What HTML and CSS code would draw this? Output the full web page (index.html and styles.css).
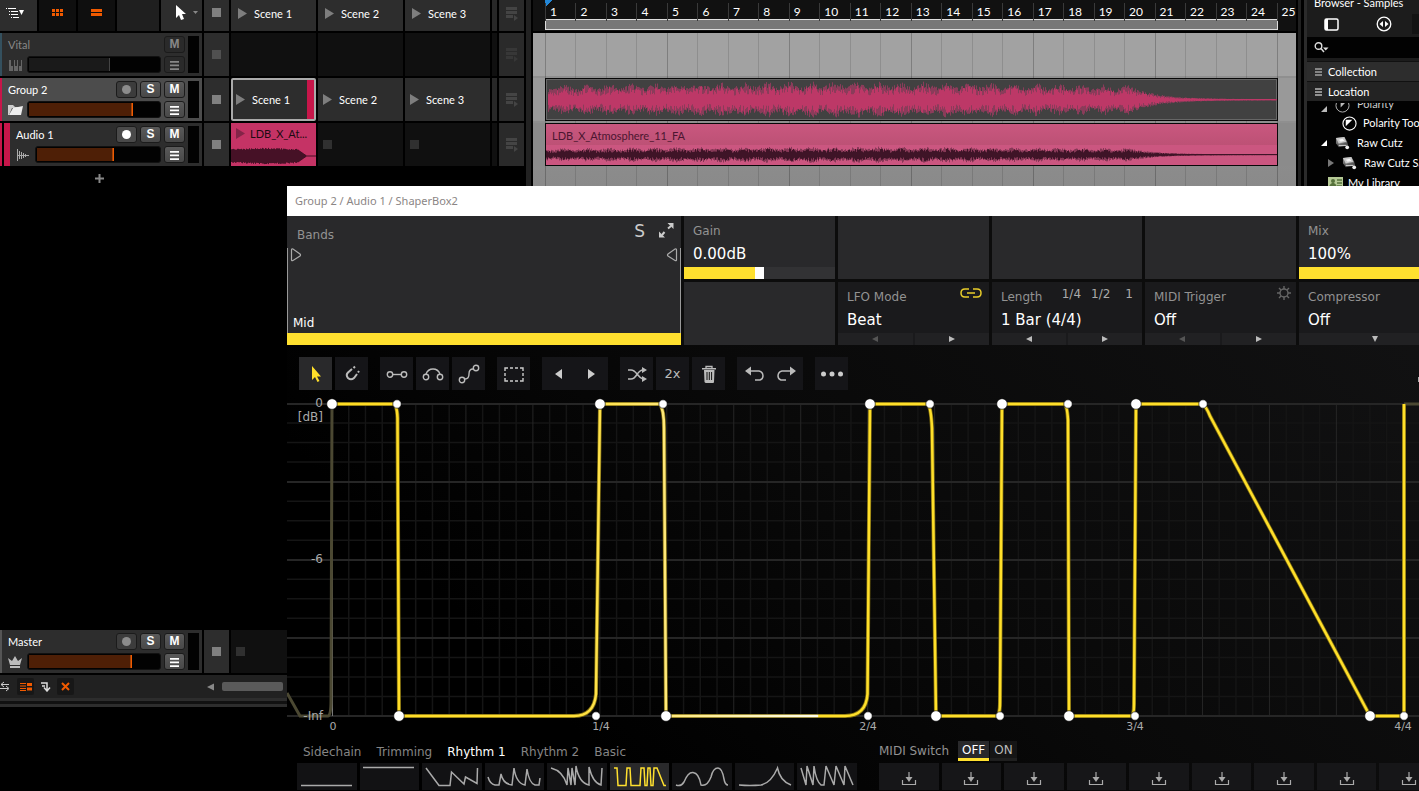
FILE: index.html
```html
<!DOCTYPE html>
<html lang="en">
<head>
<meta charset="utf-8">
<title>ShaperBox2 session</title>
<link rel="stylesheet" href="styles.css">
</head>
<body>
<svg class="defs" aria-hidden="true">
  <symbol id="play" viewBox="0 0 10 12"><path d="M0 0L10 6L0 12Z" fill="currentColor"/></symbol>
  <symbol id="lines" viewBox="0 0 10 10"><path d="M0 1.500H10M0 5.500H10M0 9.500H10" stroke="currentColor" stroke-width="2"/></symbol>
  <symbol id="queue" viewBox="0 0 12 14"><path d="M0 1.500H11M0 5.500H11M0 9.500H7" stroke="currentColor" stroke-width="3"/><path d="M8 8L12 11L8 14Z" fill="currentColor"/></symbol>
  <symbol id="load" viewBox="0 0 16 14"><path d="M1.500 8V12.500H14.500V8M8 0V6" fill="none" stroke="currentColor" stroke-width="1.200"/><path d="M4.500 5H11.500L8 10Z" fill="currentColor"/></symbol>
  <symbol id="left" viewBox="0 0 6 6"><path d="M6 0V6L0 3Z" fill="currentColor"/></symbol>
  <symbol id="right" viewBox="0 0 6 6"><path d="M0 0V6L6 3Z" fill="currentColor"/></symbol>
  <symbol id="drive" viewBox="0 0 16 14"><path d="M1 1L10 0L13 5V9L4 10L1 7Z" fill="#777"/><path d="M1 1L10 0L12 5L4 7Z" fill="#c9c9c9"/><path d="M4 3L8 2L10 4L6 5Z" fill="#f4f4f4"/><path d="M1 6L4 8L13 6L14 9L4 11Z" fill="#555"/><path d="M4 9H12" stroke="#ddd"/><circle cx="13" cy="11" r="2" fill="#eee"/></symbol>
</svg>

<div class="daw">
  <main class="launcher">
    <div class="row tools">
      <div class="toolbar">
        <button class="tool menu" aria-label="View menu"><svg width="19" height="12" viewBox="0 0 19 12"><path d="M0 1.500H1M2 1.500H10M3 4.500H4M5 4.500H12M3 7.500H4M5 7.500H12M5 10.500H6M7 10.500H13" stroke="#fff"/><path d="M13 3H18L15.500 8Z" fill="#fff"/></svg></button>
        <button class="tool dark" aria-label="Clip launcher"><svg width="11" height="7" viewBox="0 0 11 7"><path d="M0 1.500H11M0 5.500H11" stroke="#f05a00" stroke-width="3" stroke-dasharray="3 1"/></svg></button>
        <button class="tool dark" aria-label="Arranger"><svg width="11" height="7" viewBox="0 0 11 7"><path d="M0 1.500H11M0 5.500H11" stroke="#f05a00" stroke-width="3"/></svg></button>
        <div class="tool blank"></div>
        <button class="tool pointer" aria-label="Pointer tool"><svg width="22" height="16" viewBox="0 0 22 16"><path d="M0 0V13L3 10L5 15L8 14L6 9H10Z" fill="#fff"/><path d="M17 6H22L19.500 9Z" fill="#888"/></svg></button>
      </div>
      <button class="stop" aria-label="Stop all"><i></i></button>
      <button class="cell scene head"><svg><use href="#play"/></svg>Scene 1</button>
      <button class="cell scene head"><svg><use href="#play"/></svg>Scene 2</button>
      <button class="cell scene head"><svg><use href="#play"/></svg>Scene 3</button>
      <div class="sliver lit"></div>
      <button class="queue" aria-label="Queue"><svg><use href="#queue"/></svg></button>
    </div>
    <div class="row">
      <section class="track off">
        <div class="track-body">
          <div class="line"><span class="name">Vital</span><button class="mini">M</button></div>
          <div class="line"><svg class="ico" viewBox="0 0 16 14"><path d="M1 2H3V8H5V13H1ZM6 2H7V8H9V2H10V13H6ZM11 8H13V2H14V13H11Z" fill="#666"/></svg><input type="range" class="vol" aria-label="Vital volume" value="62" style="--v:62%"><button class="mini" aria-label="Vital menu"><svg><use href="#lines"/></svg></button></div>
        </div><div class="meter"></div>
      </section>
      <button class="stop dim" aria-label="Stop Vital"><i></i></button>
      <div class="cell empty"></div><div class="cell empty"></div><div class="cell empty"></div>
      <div class="sliver"></div>
      <button class="queue dim" aria-label="Queue Vital"><svg><use href="#queue"/></svg></button>
    </div>
    <div class="row">
      <section class="track group">
        <div class="track-body">
          <div class="line"><span class="name">Group 2</span><button class="mini rec" aria-label="Record Group 2"><i></i></button><button class="mini">S</button><button class="mini">M</button></div>
          <div class="line"><svg class="ico" viewBox="0 0 16 14"><path d="M0 2H5L7 4H12V5H4L1 12H0Z" fill="#ccc"/><path d="M5 5L15 3L13 12H1Z" fill="#eee"/></svg><input type="range" class="vol" aria-label="Group 2 volume" value="80" style="--v:80%"><button class="mini" aria-label="Group 2 menu"><svg><use href="#lines"/></svg></button></div>
        </div><div class="meter"></div>
      </section>
      <button class="stop" aria-label="Stop Group 2"><i></i></button>
      <button class="cell scene picked"><svg><use href="#play"/></svg>Scene 1</button>
      <button class="cell scene"><svg><use href="#play"/></svg>Scene 2</button>
      <button class="cell scene"><svg><use href="#play"/></svg>Scene 3</button>
      <div class="sliver lit"></div>
      <button class="queue" aria-label="Queue Group 2"><svg><use href="#queue"/></svg></button>
    </div>
    <div class="row">
      <section class="track child">
        <div class="track-body">
          <div class="line"><span class="name">Audio 1</span><button class="mini rec armed" aria-label="Record Audio 1"><i></i></button><button class="mini">S</button><button class="mini">M</button></div>
          <div class="line"><svg class="ico" viewBox="0 0 16 14"><path d="M1.500 1V13M3.500 3V11M5.500 4V11M7.500 5V10M9.500 6V9M1 7.500H13" stroke="#aaa" fill="none"/></svg><input type="range" class="vol" aria-label="Audio 1 volume" value="63" style="--v:63%"><button class="mini" aria-label="Audio 1 menu"><svg><use href="#lines"/></svg></button></div>
        </div><div class="meter"></div>
      </section>
      <button class="stop" aria-label="Stop Audio 1"><i></i></button>
      <button class="cell clip"><span class="clip-name"><svg><use href="#play"/></svg>LDB_X_At...</span><svg class="clip-wave" id="launch-wave" viewBox="0 0 85 20"></svg></button>
      <button class="cell slot" aria-label="Empty slot"><i></i></button>
      <button class="cell slot" aria-label="Empty slot"><i></i></button>
      <div class="sliver"></div>
      <button class="queue" aria-label="Queue Audio 1"><svg><use href="#queue"/></svg></button>
    </div>
    <button class="add" aria-label="Add track"><svg width="9" height="9" viewBox="0 0 9 9"><path d="M4.500 0V9M0 4.500H9" stroke="#888" stroke-width="2"/></svg></button>
    <div class="spacer"></div>
    <div class="row">
      <section class="track master">
        <div class="track-body">
          <div class="line"><span class="name">Master</span><button class="mini rec" aria-label="Record Master"><i></i></button><button class="mini">S</button><button class="mini">M</button></div>
          <div class="line"><svg class="ico" viewBox="0 0 16 14"><path d="M0 3L4 6L7 1L10 6L14 3L12 10H2ZM2 11H12V13H2Z" fill="#bbb"/></svg><input type="range" class="vol" aria-label="Master volume" value="79" style="--v:79%"><button class="mini" aria-label="Master menu"><svg><use href="#lines"/></svg></button></div>
        </div><div class="meter"></div>
      </section>
      <button class="stop" aria-label="Stop Master"><i></i></button>
      <div class="cell slot wide"><i></i></div>
    </div>
    <footer class="status">
      <button class="foot" aria-label="Crossfade"><svg width="10" height="11" viewBox="0 0 10 11"><path d="M1 3.500H9M0 7.500H8M4 1L1 3.500L4 6M6 5L9 7.500L6 10" stroke="#ccc" fill="none"/></svg></button>
      <button class="foot on" aria-label="Device panel"><svg width="12" height="8" viewBox="0 0 12 8"><path d="M0 .5H6M0 3H6M0 5.500H6M0 7.500H6" stroke="#f05a00"/><path d="M7 1.500H12M7 6H12" stroke="#f05a00" stroke-width="3"/></svg></button>
      <button class="foot" aria-label="Sends"><svg width="10" height="10" viewBox="0 0 10 10"><path d="M0 1H6V8M1 4H4M3 5.500L6 9L9 5.500" stroke="#ddd" stroke-width="1.500" fill="none"/></svg></button>
      <button class="foot on" aria-label="Close panel"><svg width="9" height="9" viewBox="0 0 9 9"><path d="M1 1L8 8M8 1L1 8" stroke="#f05a00" stroke-width="2"/></svg></button>
      <button class="scroll-left" aria-label="Scroll left"><svg><use href="#left"/></svg></button>
      <div class="scrollbar"></div>
    </footer>
    <div class="panel-edge"></div>
  </main>

  <section class="arranger">
    <div class="ruler">
      <ol class="bars"><li>1</li><li>2</li><li>3</li><li>4</li><li>5</li><li>6</li><li>7</li><li>8</li><li>9</li><li>10</li><li>11</li><li>12</li><li>13</li><li>14</li><li>15</li><li>16</li><li>17</li><li>18</li><li>19</li><li>20</li><li>21</li><li>22</li><li>23</li><li>24</li><li>25</li></ol>
      <div class="loop"></div>
    </div>
    <div class="lanes">
      <div class="lane lane-a"></div>
      <div class="lane lane-b"><div class="event group-event"><svg id="group-wave" viewBox="0 0 731 41"></svg></div></div>
      <div class="lane lane-c"><div class="event audio-event"><span>LDB_X_Atmosphere_11_FA</span><svg id="audio-wave" viewBox="0 0 731 19"></svg></div></div>
      <svg class="beats" id="beats" viewBox="0 0 763 153"></svg>
    </div>
  </section>

  <aside class="browser">
    <h2>Browser - Samples</h2>
    <div class="browser-tabs">
      <button aria-label="Panel"><svg width="15" height="13" viewBox="0 0 15 13"><rect x="1" y="1" width="13" height="11" rx="1.500" fill="none" stroke="#fff" stroke-width="1.500"/><path d="M2.500 1V12" stroke="#fff" stroke-width="3"/></svg></button>
      <button aria-label="Preview"><svg width="16" height="16" viewBox="0 0 16 16"><circle cx="8" cy="8" r="6.800" fill="none" stroke="#fff" stroke-width="1.300"/><path d="M7 5V11L3.500 8ZM9 5V11L12.500 8Z" fill="#fff"/></svg></button>
      <span class="tab-more"></span>
    </div>
    <label class="search"><svg width="15" height="11" viewBox="0 0 15 11"><circle cx="4.500" cy="4" r="3.300" fill="none" stroke="#ddd" stroke-width="1.400"/><path d="M7 6.500L10 10" stroke="#ddd" stroke-width="1.500"/><path d="M9 5.500H14.500L11.700 8.500Z" fill="#ddd"/></svg><input type="search" aria-label="Search samples"></label>
    <button class="filter collection"><svg viewBox="0 0 7 8"><path d="M0 1H7M0 4H7M0 7H7" stroke="#ddd"/></svg>Collection</button>
    <button class="filter location"><svg viewBox="0 0 7 8"><path d="M0 1H7M0 4H7M0 7H7" stroke="#fff"/></svg>Location</button>
    <ul class="tree">
      <li class="cut"><svg class="fold" viewBox="0 0 8 8"><path d="M7 1V7H1Z" fill="#bbb"/></svg><svg class="glyph" viewBox="0 0 16 16"><circle cx="8" cy="8" r="7" fill="none" stroke="#bbb"/><path d="M6 5H11L6 10Z" fill="#bbb"/></svg>Polarity</li>
      <li class="deep"><svg class="glyph" viewBox="0 0 16 16"><circle cx="8" cy="8" r="7" fill="none" stroke="#fff" stroke-width="1.200"/><path d="M4 4H11L4 11Z" fill="#fff"/></svg>Polarity Tools</li>
      <li><svg class="fold" viewBox="0 0 8 8"><path d="M7 1V7H1Z" fill="#fff"/></svg><svg class="glyph"><use href="#drive"/></svg>Raw Cutz</li>
      <li class="sub"><svg class="fold" viewBox="0 0 8 8"><path d="M1 0V8L7 4Z" fill="#777"/></svg><svg class="glyph"><use href="#drive"/></svg>Raw Cutz Samples</li>
      <li class="lib"><svg class="glyph" viewBox="0 0 15 13"><rect width="15" height="13" fill="#b5c995"/><circle cx="5" cy="4" r="2" fill="#56713c"/><path d="M2 9Q5 4 8 9M9 3H14M9 6H14M9 9H14" stroke="#56713c" stroke-width="1.500" fill="#56713c"/></svg>My Library</li>
    </ul>
  </aside>
</div>

<section class="plugin" aria-label="ShaperBox2">
  <header class="title">Group 2 / Audio 1 / ShaperBox2</header>
  <div class="controls">
    <div class="bands">
      <div class="bands-top"><span class="label">Bands</span><button class="solo">S</button><button aria-label="Expand"><svg width="15" height="15" viewBox="0 0 15 15"><path d="M8.500 0H14.500V6ZM0 8.500V14.500H6Z" fill="#ccc"/><path d="M9 5.500L12 3M3 12L5.500 9" stroke="#ccc" stroke-width="2"/></svg></button></div>
      <div class="split"><svg width="14" height="14" viewBox="0 0 14 14"><path d="M3.500 2Q3.500 .5 5 1L12 6Q13 7 12 8L5 12.500Q3.500 13 3.500 12Z" fill="none" stroke="#aaa" stroke-width="1.200"/></svg><svg width="14" height="14" viewBox="0 0 14 14"><path d="M10.500 2Q10.500 .5 9 1L2 6Q1 7 2 8L9 12.500Q10.500 13 10.500 12Z" fill="none" stroke="#aaa" stroke-width="1.200"/></svg><span>Mid</span></div>
      <div class="band-bar"></div>
    </div>
    <div class="param"><label class="label" for="gain">Gain</label><output class="value">0.00dB</output><input id="gain" type="range" class="bar" value="50" style="--v:50%"></div>
    <div class="param"></div><div class="param"></div><div class="param"></div>
    <div class="param"><label class="label" for="mix">Mix</label><output class="value">100%</output><input id="mix" type="range" class="bar full" value="100" style="--v:100%"></div>
    <div class="param"></div>
    <div class="param mode"><span class="label">LFO Mode</span><svg class="corner" width="22" height="10" viewBox="0 0 22 10"><path d="M9 1H5Q1 1 1 5T5 9H9M13 1H17Q21 1 21 5T17 9H13M7 5H15" fill="none" stroke="#e9cd2a" stroke-width="1.500"/></svg><output class="value">Beat</output><div class="steps"><button class="spent" aria-label="Previous mode"><svg><use href="#left"/></svg></button><button aria-label="Next mode"><svg><use href="#right"/></svg></button></div></div>
    <div class="param mode"><span class="label">Length</span><span class="fractions"><button>1/4</button><button>1/2</button><button>1</button></span><output class="value">1 Bar (4/4)</output><div class="steps"><button aria-label="Shorter"><svg><use href="#left"/></svg></button><button aria-label="Longer"><svg><use href="#right"/></svg></button></div></div>
    <div class="param mode"><span class="label">MIDI Trigger</span><svg class="corner gear" width="14" height="14" viewBox="0 0 14 14"><circle cx="7" cy="7" r="4" fill="none" stroke="#666" stroke-width="1.400"/><path d="M7 0V3M7 11V14M0 7H3M11 7H14M2 2L4 4M10 10L12 12M12 2L10 4M4 10L2 12" stroke="#666" stroke-width="1.400"/></svg><output class="value">Off</output><div class="steps"><button class="spent" aria-label="Previous trigger"><svg><use href="#left"/></svg></button><button aria-label="Next trigger"><svg><use href="#right"/></svg></button></div></div>
    <div class="param mode"><span class="label">Compressor</span><output class="value">Off</output><div class="steps one"><button aria-label="Compressor menu"><svg viewBox="0 0 6 6"><path d="M0 0H6L3 6Z" fill="currentColor"/></svg></button></div></div>
  </div>

  <div class="edit-tools">
    <div class="set"><button class="active" aria-label="Select"><svg viewBox="0 0 24 24"><path d="M8 4V18L11 15L13.500 20L15.500 19L13 14.500H17Z" fill="#ffdf2a"/></svg></button><button aria-label="Snap"><svg viewBox="0 0 24 24"><path d="M12 7L8 10.500Q5.500 13 8 16Q11 18.500 14 16L17 12" fill="none" stroke="#bbb" stroke-width="2"/><path d="M13.500 6L15 4.500M18 10.500L19 9" stroke="#bbb" stroke-width="2"/></svg></button></div>
    <div class="set"><button aria-label="Line"><svg viewBox="0 0 24 24"><g fill="none" stroke="#bbb" stroke-width="1.400"><circle cx="5" cy="12.500" r="2.700"/><circle cx="19" cy="12.500" r="2.700"/><path d="M8 12.500H16"/></g></svg></button><button aria-label="Arc"><svg viewBox="0 0 24 24"><g fill="none" stroke="#bbb" stroke-width="1.400"><circle cx="5" cy="15" r="2.700"/><circle cx="19" cy="15" r="2.700"/><path d="M5 12Q7 7 12 7T19 12"/></g></svg></button><button aria-label="S curve"><svg viewBox="0 0 24 24"><g fill="none" stroke="#bbb" stroke-width="1.400"><circle cx="5" cy="18" r="2.700"/><circle cx="19" cy="6" r="2.700"/><path d="M8 17Q12 17 12 12T16 7"/></g></svg></button></div>
    <div class="set"><button aria-label="Marquee"><svg viewBox="0 0 24 24"><path d="M3 9V6H6M18 6H21V9M21 16V19H18M6 19H3V16M8 6H11M13 6H16M8 19H11M13 19H16M3 11V14M21 11V14" fill="none" stroke="#ccc" stroke-width="1.400"/></svg></button></div>
    <div class="set joined"><button aria-label="Shift left"><svg viewBox="0 0 24 24"><path d="M15 7V17L8 12Z" fill="#ccc"/></svg></button><button aria-label="Shift right"><svg viewBox="0 0 24 24"><path d="M8 7V17L15 12Z" fill="#ccc"/></svg></button></div>
    <div class="set"><button aria-label="Shuffle"><svg viewBox="0 0 24 24"><path d="M3 8H6Q9 8 12 12T18 17H19M3 17H6Q9 17 12 12.500T18 8H19" fill="none" stroke="#bbb" stroke-width="1.500"/><path d="M17 5L22 8L17 11ZM17 14L22 17L17 20Z" fill="#bbb"/></svg></button><button>2x</button><button aria-label="Delete"><svg viewBox="0 0 24 24"><path d="M7 8H17.500L17 20Q17 21 16 21H9Q8 21 7.500 20ZM5 6H19V7.500H5Z" fill="#bbb"/><path d="M9 6V4.500H15V6" fill="none" stroke="#bbb" stroke-width="1.300"/><path d="M10 10V18M12.300 10V18M14.600 10V18" stroke="#111" stroke-width="1"/></svg></button></div>
    <div class="set joined"><button aria-label="Undo"><svg viewBox="0 0 24 24"><path d="M7 9H17Q21 10 21 14Q21 17 18 18H13" fill="none" stroke="#bbb" stroke-width="1.500"/><path d="M9 4.500V13.500L3 9Z" fill="#bbb"/></svg></button><button aria-label="Redo"><svg viewBox="0 0 24 24"><path d="M17 9H7Q3 10 3 14Q3 17 6 18H11" fill="none" stroke="#bbb" stroke-width="1.500"/><path d="M15 4.500V13.500L21 9Z" fill="#bbb"/></svg></button></div>
    <div class="set"><button aria-label="More"><svg viewBox="0 0 24 24"><g fill="#ccc"><circle cx="3.500" cy="12" r="2.500"/><circle cx="12" cy="12" r="2.500"/><circle cx="20.500" cy="12" r="2.500"/></g></svg></button></div>
    <button class="more-edge" aria-label="More tools"></button>
  </div>

  <svg class="plot" viewBox="287 390 1132 346" aria-label="Volume envelope">
    <defs><linearGradient id="trail" gradientUnits="userSpaceOnUse" x1="332" y1="0" x2="1404" y2="0"><stop offset="0" stop-color="#ffdc22"/><stop offset=".22" stop-color="#ffdf35"/><stop offset=".31" stop-color="#ffe878"/><stop offset=".453" stop-color="#fffff0"/><stop offset=".454" stop-color="#ffdf2a"/><stop offset="1" stop-color="#ffdf2a"/></linearGradient></defs>
    <g id="plot-grid"></g>
    <path class="ghost" d="M287 693L300 716H328Q331 716 331 700L332 404M1404 404H1419"/>
    <g class="curve"><path id="curve-glow"/><path id="curve-line"/></g>
    <g id="nodes"></g>
    <g class="axis"><text x="323" y="407" text-anchor="end">0</text><text x="323" y="421" text-anchor="end">[dB]</text><text x="323" y="563" text-anchor="end">-6</text><text x="323" y="720" text-anchor="end">-Inf</text></g>
    <g class="axis beat"><text x="333" y="730">0</text><text x="601" y="730">1/4</text><text x="868" y="730">2/4</text><text x="1135" y="730">3/4</text><text x="1403" y="730">4/4</text></g>
  </svg>

  <div class="library">
    <div class="presets">
      <nav class="tabs"><button>Sidechain</button><button>Trimming</button><button class="active">Rhythm 1</button><button>Rhythm 2</button><button>Basic</button></nav>
      <div class="shapes">
        <button aria-label="Shape 1"><svg viewBox="0 0 60 27"><path d="M4 22.500H55"/></svg></button>
        <button aria-label="Shape 2"><svg viewBox="0 0 60 27"><path d="M4 4.500H55"/></svg></button>
        <button aria-label="Shape 3"><svg viewBox="0 0 60 27"><path d="M4 5L17 22.500H28L29.500 9L42 21L43.500 14L55 20.500L55.500 5"/></svg></button>
        <button aria-label="Shape 4"><svg viewBox="0 0 60 27"><path d="M4 14Q6 21 11 22H15L17 11Q19 21 28 22L30 5Q32 20 41 22L43 6Q45 20 51 22H55L56 15"/></svg></button>
        <button aria-label="Shape 5"><svg viewBox="0 0 60 27"><path d="M4 5Q16 8 20 22L21 5L24 22L25 5L28 22L29 3Q32 20 42 22V4Q46 20 54 22L55 5"/></svg></button>
        <button class="active" aria-label="Shape 6"><svg viewBox="0 0 60 27"><path d="M4 5H7L8 22.500H16L17 5H20L21 22.500H30L31 5H34L35 22.500H37L38 5H40L41 22.500H43L44 5H47L54 22.500H56"/></svg></button>
        <button aria-label="Shape 7"><svg viewBox="0 0 60 27"><path d="M4 22Q9 24 12 19Q16 9 21 9.500Q27 10 29 22Q35 24 39 14Q41 5 46 5Q50 5 52 16Q53 22 56 22"/></svg></button>
        <button aria-label="Shape 8"><svg viewBox="0 0 60 27"><path d="M4 22Q15 23 26 22Q36 20 42.500 5Q45 18 56 22"/></svg></button>
        <button aria-label="Shape 9"><svg viewBox="0 0 60 27"><path d="M4 5L9 22L10 3L16 22L17 3Q19 18 24 22H27L29 3L37 22L39 3L47 22L48 3L56 22"/></svg></button>
      </div>
    </div>
    <div class="midi">
      <div class="switch"><span>MIDI Switch</span><button class="active">OFF</button><button>ON</button></div>
      <div class="shapes slots">
        <button aria-label="Load slot 1"><svg><use href="#load"/></svg></button><button aria-label="Load slot 2"><svg><use href="#load"/></svg></button><button aria-label="Load slot 3"><svg><use href="#load"/></svg></button><button aria-label="Load slot 4"><svg><use href="#load"/></svg></button><button aria-label="Load slot 5"><svg><use href="#load"/></svg></button><button aria-label="Load slot 6"><svg><use href="#load"/></svg></button><button aria-label="Load slot 7"><svg><use href="#load"/></svg></button><button aria-label="Load slot 8"><svg><use href="#load"/></svg></button><button aria-label="Load slot 9"><svg><use href="#load"/></svg></button>
      </div>
    </div>
  </div>
</section>
<script src="script.js"></script>
</body>
</html>
```
FILE: styles.css
```css
* { box-sizing: border-box; }
html, body { margin: 0; height: 100%; background: #000; overflow: hidden; }
body { position: relative; color: #fff; font: 11px/16px Lato, "Open Sans", sans-serif; }
button { margin: 0; padding: 0; border: 0; background: none; color: inherit; font: inherit; display: flex; align-items: center; justify-content: center; }
input { margin: 0; font: inherit; }
svg { display: block; flex: none; }
.defs { position: absolute; width: 0; height: 0; }

.daw { display: flex; height: 100vh; }
.launcher { width: 533px; flex: none; display: flex; flex-direction: column; background: linear-gradient(90deg, transparent 526px, #222 526px, #222 531px, #000 531px); }
.row { display: flex; gap: 2px; height: 43px; margin-bottom: 2px; flex: none; }
.row.tools { height: 31px; }
.toolbar { display: flex; gap: 2px; width: 202px; flex: none; }
.tool { width: 37px; padding-bottom: 6px; background: #2d2d2d; }
.tool.menu { padding-right: 6px; }
.tool.dark { background: #0f0f0f; }
.tool.blank { flex: 1; background: #1f1f1f; }
.tool.pointer { width: 41px; padding-left: 11px; }

.track { width: 202px; flex: none; display: flex; gap: 3px; padding: 3px; padding-left: 0; background: #2d2d2d; border-left: 2px solid #34505e; }
.track-body { flex: 1; min-width: 0; display: flex; flex-direction: column; gap: 3px; padding-left: 6px; }
.line { display: flex; gap: 3px; height: 17px; align-items: center; }
.name { flex: 1; }
.meter { width: 11px; flex: none; background: #020202; }
.mini { width: 21px; height: 17px; flex: none; border: 1px solid #1b1b1b; border-radius: 3px; background: linear-gradient(#5a5a5a, #484848); font: bold 12px/15px "Liberation Sans", sans-serif; }
.mini svg { width: 9px; height: 10px; }
.mini.rec { background: #3c3c3c; }
.mini i { width: 9px; height: 9px; border-radius: 50%; background: #8c8c8c; }
.mini.armed { background: #4a4a4a; }
.mini.armed i { background: #fff; }
.ico { width: 16px; height: 14px; }
.track.group { background: #4c4c4c; border-color: #c7164a; }
.track.child { border-color: #c7164a; }
.track.child .track-body { margin: -3px 0 -3px 2px; padding: 3px 0 3px 6px; border-left: 6px solid #c7164a; box-shadow: -2px 0 #000; }
.track.master { border-color: #555; }
.track.off .name, .track.off .mini { color: #888; }
.track.off .mini { background: #2a2a2a; }
.vol { appearance: none; flex: 1; min-width: 0; height: 17px; padding: 1px; border: 1px solid #111; border-radius: 3px; background: #020202; }
.vol::-webkit-slider-runnable-track { height: 13px; background: linear-gradient(#4e1f06, #4e1f06) no-repeat 0 0 / var(--v) 100%; }
.vol::-webkit-slider-thumb { appearance: none; width: 1px; height: 13px; background: #f05a00; box-shadow: -1px 0 #a44408; }
.off .vol::-webkit-slider-runnable-track { background-image: linear-gradient(#1a1a1a, #1a1a1a); }
.off .vol::-webkit-slider-thumb { background: #444; box-shadow: none; }

.stop { width: 25px; flex: none; background: #2d2d2d; }
.stop i { width: 9px; height: 9px; background: #808080; }
.tools .stop { padding-bottom: 6px; }
.dim i { background: #505050; }
.cell { width: 85px; flex: none; background: #101010; }
.scene { justify-content: flex-start; gap: 7px; padding-left: 5px; background: #2d2d2d; }
.scene svg, .clip-name svg { width: 9px; height: 11px; color: #7e7e7e; }
.scene.head { padding: 0 0 4px 7px; }
.scene.picked { border: 2px solid #aaa; border-radius: 2px; padding-left: 3px; background: linear-gradient(#c7164a, #c7164a) no-repeat 74px 0 / 7px 100% #2d2d2d; }
.clip { display: block; background: #c53365; color: #1c0b12; overflow: hidden; text-align: left; }
.clip-name { display: flex; gap: 5px; align-items: center; height: 20px; padding-left: 5px; white-space: nowrap; }
.clip-name svg { color: #842448; }
.clip-wave { width: 85px; height: 20px; margin-top: 2px; }
.slot { justify-content: flex-start; padding-left: 5px; }
.cell.slot { display: flex; align-items: center; }
.slot i { width: 9px; height: 9px; background: #303030; }
.slot.wide { flex: 1; }
.sliver { width: 5px; flex: none; background: #101010; }
.sliver.lit { background: #282828; }
.queue { width: 25px; flex: none; background: #2a2a2a; color: #444; }
.tools .queue { padding-bottom: 4px; }
.queue svg { width: 12px; height: 14px; }
.queue.dim { color: #373737; }
.add { height: 20px; width: 199px; }
.spacer { flex: 1; }
.status { display: flex; align-items: center; height: 23px; background: #212121; flex: none; }
.foot { width: 17px; height: 17px; margin-right: 3px; border-radius: 2px; }
.foot:first-child { width: 14px; padding-right: 4px; }
.foot.on { background: #171717; }
.scroll-left { margin-left: 125px; width: 16px; color: #888; }
.scroll-left svg { width: 7px; height: 8px; }
.scrollbar { width: 61px; height: 9px; border-radius: 2px; background: #5a5a5a; margin-left: 4px; }
.panel-edge { height: 93px; flex: none; background: linear-gradient(#2d2d2d 3px, #111 3px, #111 6px, #2d2d2d 6px, #2d2d2d 9px, #000 9px); }

.arranger { flex: 1; min-width: 0; overflow: hidden; border-right: 2px solid #000; }
.ruler { height: 31px; padding-left: 12px; background: #111; }
.bars { list-style: none; margin: 0; padding: 3px 0 0; width: 762px; display: grid; grid-template-columns: repeat(25, 1fr); height: 19px; background: linear-gradient(135deg, #2387d8 5px, transparent 5px); }
.bars li { border-left: 1px solid #3a3a3a; padding-left: 4px; font-size: 12px; line-height: 18px; }
.loop { width: 733px; height: 11px; border: 1px solid #ddd; background: #777; }
.lanes { position: relative; margin-top: 2px; height: 153px; display: flex; flex-direction: column; gap: 2px; background: linear-gradient(#8f8f8f 88px, #8a8a8a); }
.beats { position: absolute; inset: 0; width: 763px; height: 153px; }
.lane { height: 43px; padding-left: 12px; background: #a2a2a2; }
.lane-b { background: #999; }
.lane-c { background: #8b8b8b; }
.event { position: relative; z-index: 1; width: 733px; height: 43px; border: 1px solid #080808; overflow: hidden; }
.group-event { background: #414141; box-shadow: inset 0 0 0 1px #666; }
.group-event svg { width: 731px; height: 41px; }
.audio-event { background: #cb5680; color: #4b1630; }
.audio-event span { display: block; height: 21px; padding-left: 6px; line-height: 24px; background: linear-gradient(#c9577f, #bd5175); }
.audio-event svg { width: 731px; height: 19px; }

.browser { width: 121px; flex: none; height: 186px; overflow: hidden; background: #1c1c1c; border-left: 3px solid #202020; box-shadow: inset 3px 0 #000, inset 6px 0 #2b2b2b; padding-left: 6px; }
.browser h2 { margin: -5px 0 0; padding-left: 7px; font: 11px/16px Lato, sans-serif; white-space: nowrap; }
.browser-tabs { display: flex; align-items: center; gap: 37px; height: 26px; padding-left: 17px; }
.tab-more { width: 8px; height: 20px; margin-left: -17px; background: #131313; }
.search { display: flex; height: 21px; padding-left: 7px; align-items: center; background: #020202; }
.search input { width: 80px; border: 0; background: none; color: #fff; outline: 0; }
.filter { width: 100%; height: 20px; justify-content: flex-start; gap: 6px; padding-left: 8px; background: #2d2d2d; border-top: 1px solid #111; }
.filter svg { width: 7px; height: 8px; }
.collection { margin-top: 3px; }
.location { background: #232323; }
.tree { list-style: none; margin: 0; padding: 2px 0 0; background: #020202; white-space: nowrap; }
.tree li { height: 20px; display: flex; align-items: center; gap: 7px; padding-left: 13px; }
.tree .cut { height: 10px; overflow: hidden; align-items: flex-end; color: #ccc; line-height: 18px; }
.fold { width: 8px; height: 8px; }
.glyph { width: 15px; height: 15px; }
.tree .deep { padding-left: 35px; gap: 6px; }
.tree .sub { padding-left: 20px; }
.tree .lib { padding-left: 21px; gap: 5px; }

.plugin { position: absolute; left: 287px; top: 186px; right: 0; bottom: 0; overflow: hidden; display: flex; flex-direction: column; background: linear-gradient(45deg, #000 20%, #090909 50%, #131314); font: 12px/16px "DejaVu Sans", Verdana, sans-serif; color: #fff; }
.title { height: 30px; flex: none; padding-left: 8px; background: #fff; color: #8b8585; font: 11px/30px "Noto Sans", "Open Sans", sans-serif; }
.controls { display: grid; grid-template-columns: 394px 151px 151px 150px 151px 151px; grid-template-rows: 63px 63px; gap: 3px; flex: none; background: #0c0c0c; }
.bands { grid-row: span 2; background: #29292b; display: flex; flex-direction: column; }
.bands-top { display: flex; align-items: center; gap: 14px; height: 32px; padding: 0 7px 0 10px; }
.bands-top .label { flex: 1; padding-top: 5px; }
.bands-top button { padding-bottom: 3px; }
.label { color: #929292; }
.solo { color: #ccc; font-size: 17px; }
.split { flex: 1; display: grid; grid-template-columns: 1fr auto; align-content: space-between; border: solid #999; border-width: 0 1px; }
.split span { padding: 0 0 2px 5px; }
.band-bar { height: 12px; background: #ffe02f; }
.param { display: grid; grid-template-columns: 1fr auto; grid-template-rows: 28px 23px 12px; background: #29292b; }
.param .label { padding: 7px 0 0 9px; }
.param.mode { background: #1a1a1c; }
.value { grid-column: 1 / -1; padding-left: 9px; font-size: 15px; line-height: 20px; }
.bar { appearance: none; grid-column: 1 / -1; width: 100%; height: 12px; background: #323234; }
.bar::-webkit-slider-runnable-track { height: 12px; background: linear-gradient(#ffe02f, #ffe02f) no-repeat 0 0 / var(--v) 100%; }
.bar::-webkit-slider-thumb { appearance: none; width: 9px; height: 12px; background: #fff; }
.bar.full::-webkit-slider-thumb { background: #ffe02f; }
.corner { margin: 6px 7px 0 0; }
.gear { margin: 4px 5px 0 0; }
.fractions { display: flex; gap: 10px; padding: 0 9px 4px 0; color: #aaa; }
.fractions button:last-child { margin-left: 5px; }
.steps { grid-column: 1 / -1; display: grid; grid-template-columns: 1fr 1fr; gap: 2px; }
.steps.one { grid-template-columns: 1fr; }
.steps button { background: #212123; color: #bbb; }
.steps .spent { color: #555; }
.steps svg { width: 6px; height: 6px; }

.edit-tools { display: flex; gap: 12px; padding: 12px 0 0 12px; flex: none; }
.set { display: flex; gap: 3px; }
.set.joined { gap: 0; }
.edit-tools .set button { width: 33px; height: 33px; background: #151518; color: #bbb; font-size: 13px; }
.edit-tools .set button.active { background: #29292b; }
.edit-tools svg { width: 24px; height: 24px; }
.edit-tools .more-edge { width: 1px; height: 5px; margin: 20px 0 0 auto; background: #aaa; }
.plot { width: 1132px; height: 346px; }
.major { stroke: #262626; stroke-width: 2; }
.minor { stroke: #151515; stroke-width: 1.500; }
.vmajor { stroke: #262626; stroke-width: 1; }
.origin { stroke: #777; stroke-width: 1; }
.ghost { fill: none; stroke: #4b4832; stroke-width: 3; }
.curve { fill: none; stroke-linejoin: round; }
#curve-glow { stroke: #7c6a10; stroke-width: 4; }
#curve-line { stroke: url(#trail); stroke-width: 2.500; }
#nodes circle { fill: #fff; stroke: #000; stroke-opacity: .6; stroke-width: 1; }
.axis { fill: #aaa; font-size: 12px; }
.beat { font-size: 11px; text-anchor: middle; }

.library { display: flex; gap: 22px; padding-left: 10px; }
.presets, .midi { width: 560px; flex: none; }
.tabs, .switch { display: flex; align-items: center; height: 27px; }
.tabs { gap: 15px; padding: 5px 0 0 6px; color: #858585; }
.tabs .active { color: #fff; }
.shapes { display: grid; grid-template-columns: repeat(9, 1fr); gap: 3px; }
.shapes button { height: 27px; background: #121214; overflow: hidden; }
.shapes .active { background: #29292b; }
.shapes path { fill: none; stroke: #aaa; stroke-width: 1.500; }
.shapes .active path { stroke: #ffe02f; }
.presets .shapes svg { width: 60px; height: 27px; }
.slots button { background: #161618; color: #aaa; }
.slots svg { width: 16px; height: 14px; margin-top: 4px; }
.switch { gap: 1px; padding-top: 3px; color: #929292; }
.switch span { width: 78px; }
.switch button { height: 20px; padding: 0 4px; background: #151515; border-bottom: 3px solid #1f1f1f; color: #bbb; }
.switch .active { background: #29292b; color: #fff; border-color: #ffe02f; }
```
FILE: script.js
```js
const byId = (id) => document.getElementById(id);

let seed = 7;
function noise() {
  seed = (seed * 16807) % 2147483647;
  return seed / 2147483647;
}

// Loudness of the sample along its length, 0..1, with a slow pulse and a fading tail.
function level(t) {
  const pulse = 0.86 + 0.14 * Math.cos((t * 731 - 18) / 22.5 * Math.PI * 2);
  const swell = 0.8 + 0.2 * Math.sin(Math.min(t / 0.8, 1) * Math.PI);
  if (t < 0.8) return pulse * swell;
  return 0.68 * Math.exp(-(t - 0.8) * 26) + 0.02;
}

function waveform(id, from, width, mid, height, peak, body) {
  let outer = "";
  let inner = "";
  for (let x = from; x < width; x++) {
    const l = level(x / width) * height;
    const up = l * (0.7 + 0.45 * noise());
    const down = l * (0.7 + 0.45 * noise());
    outer += `M${x + 0.5} ${mid - up}V${mid + down + 0.5}`;
    inner += `M${x + 0.5} ${mid - l * (0.35 + 0.55 * noise())}V${mid + l * (0.35 + 0.55 * noise()) + 0.5}`;
  }
  byId(id).innerHTML = `<path d="${outer}" stroke="${peak}"/><path d="${inner}" stroke="${body}"/><path d="M${from} ${mid}H${width - from}" stroke="${body}"/>`;
}
waveform("group-wave", 2, 731, 20.5, 16, "#8a3c5a", "#bd3867");
waveform("audio-wave", 0, 731, 9.5, 7, "#873957", "#3f1427");

let clip = "";
for (let x = 0; x < 85; x++) {
  const swell = 5.5 + 1.2 * Math.sin(x / 22);
  const up = x < 68 ? swell + noise() * 1.5 : Math.max(0.5, 5.5 - (x - 68) * 0.7);
  const down = x < 68 ? swell + noise() * 1.5 : Math.max(0.5, 5.5 - (x - 68) * 0.7);
  clip += `M${x + 0.5} ${10 - up}V${10 + down}`;
}
byId("launch-wave").innerHTML = `<path d="${clip}" stroke="#461126"/>`;

let beats = "";
for (let bar = 0; bar < 25; bar++) {
  const x = Math.floor(12 + bar * 30.5) + 0.5;
  beats += `<path d="M${x} 0V153" stroke="#000" stroke-opacity="${bar % 4 ? 0.12 : 0.22}"/>`;
}
byId("beats").innerHTML = beats;

let grid = "";
for (let i = 1; i < 16; i++) {
  const y = 403.5 + i * 19.53;
  if (i % 4) grid += `<path class="minor" d="M287 ${y}H1419"/>`;
}
for (let i = 1; i < 66; i++) {
  const x = 332 + i * 16.74;
  grid += `<path class="${i % 4 ? "minor" : "vmajor"}" d="M${x} 404V716"/>`;
}
for (let i = 0; i < 5; i++) grid += `<path class="major" d="M287 ${404 + i * 78}H1419"/>`;
grid += '<path class="origin" d="M332.5 404V716"/>';
byId("plot-grid").innerHTML = grid;

const curve = "M332 404H393Q397 404 397.500 418L399 716H574Q594 716 596 694L600 404H660Q664 410 664 428L666 716H845Q866 716 867.500 694L870 404H928Q931 408 932 428L936 716H996Q1000 716 1000 702L1002 404H1064Q1067 404 1068 420L1069 716H1131Q1134 716 1134 704L1136 404H1202Q1206 406 1210 416L1370 716H1404V404";
byId("curve-glow").setAttribute("d", curve);
byId("curve-line").setAttribute("d", curve);

const big = [[332, 404], [399, 716], [600, 404], [666, 716], [870, 404], [936, 716], [1002, 404], [1069, 716], [1136, 404], [1370, 716]];
const small = [[397, 404], [596, 716], [663, 404], [868, 716], [930, 404], [1000, 716], [1068, 404], [1135, 716], [1203, 404], [1404, 716]];
byId("nodes").innerHTML =
  big.map(([x, y]) => `<circle cx="${x}" cy="${y}" r="5.300"/>`).join("") +
  small.map(([x, y]) => `<circle cx="${x}" cy="${y}" r="4.200"/>`).join("");
```
